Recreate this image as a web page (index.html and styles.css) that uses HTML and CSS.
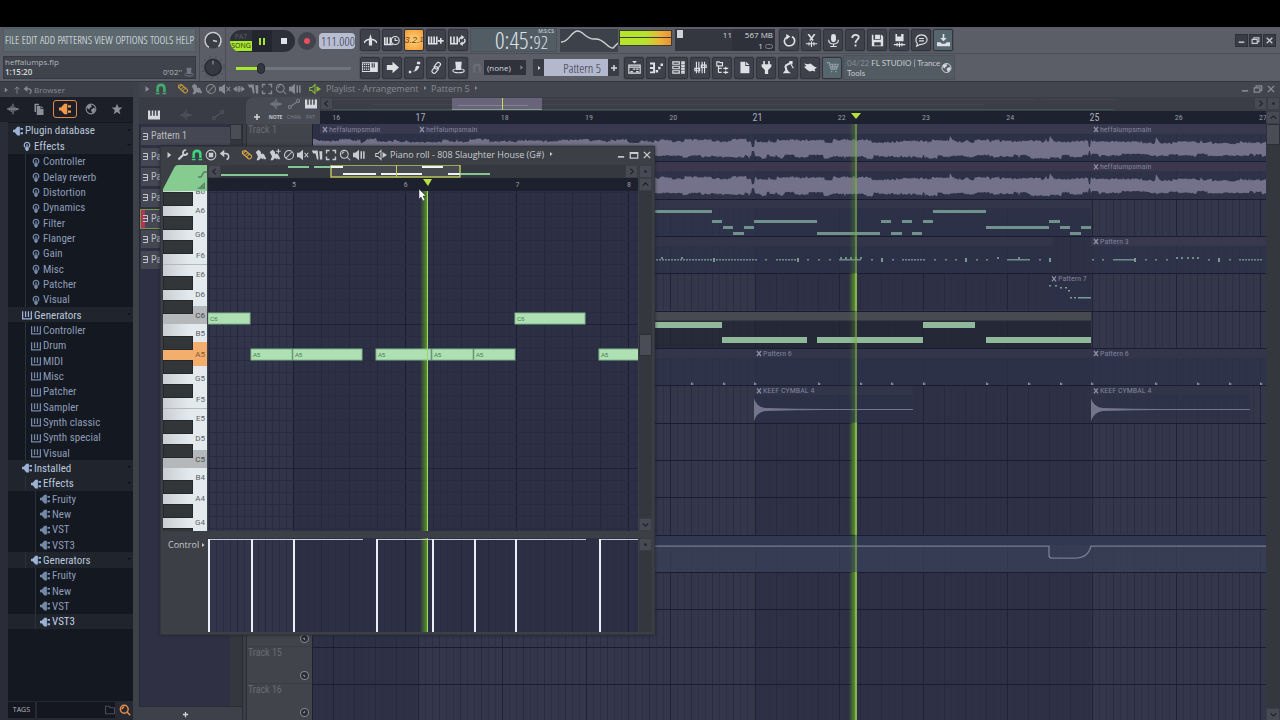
FILE: index.html
```html
<!DOCTYPE html>
<html lang="en">
<head>
<meta charset="utf-8">
<title>FL Studio - heffalumps.flp</title>
<link rel="stylesheet" href="styles.css">
</head>
<body>
<svg class="sprite" aria-hidden="true">
  <symbol id="caret" viewBox="0 0 16 16"><path class="f" d="M6 4l5 4-5 4z"/></symbol>
  <symbol id="up" viewBox="0 0 16 16"><path d="M8 14V3M4 7l4-4 4 4"/></symbol>
  <symbol id="undo" viewBox="0 0 16 16"><path stroke-width="2" d="M5 6h4c5 0 5 7 1 8"/><path class="f" d="M7 1v10L1 6z"/></symbol>
  <symbol id="magnet" viewBox="0 0 16 16"><path stroke-width="3.4" d="M3.5 12V7c0-6 9-6 9 0v5"/><path class="f" d="M1 13h5v2H1zM10 13h5v2h-5z"/></symbol>
  <symbol id="pencil" viewBox="0 0 16 16"><path d="M2 3l4-1 8 7c1 2-2 5-4 4L2 6zM3 6l4-4M6 8l4-4M8 10l4-4"/></symbol>
  <symbol id="brush" viewBox="0 0 16 16"><path class="f" d="M1 4l4-3 3 3 0 3 2-1 2 1 3 6-2 1-2-2 0 2-3-2-3 3H2l2-5z"/></symbol>
  <symbol id="brushp" viewBox="0 0 16 16"><path class="f" d="M1 4l4-3 3 3 0 3 2-1 2 1 3 6-2 1-2-2 0 2-3-2-3 3H2l2-5z"/><path d="M12.500 0v6M9.500 3h6"/></symbol>
  <symbol id="no" viewBox="0 0 16 16"><circle cx="8" cy="8" r="6"/><path d="M4 12l8-8"/></symbol>
  <symbol id="mute" viewBox="0 0 16 16"><path class="f" d="M0 5h3l5-4v14l-5-4H0z"/><path d="M10 5l5 6M15 5l-5 6"/></symbol>
  <symbol id="slip" viewBox="0 0 16 16"><path class="f" d="M0 8l5-4v8zM16 8l-5-4v8z"/><path d="M3 8h10M7 4v8M9 4v8"/></symbol>
  <symbol id="cut" viewBox="0 0 16 16"><path class="f" d="M1 2h8l1 12H8L6 6H3zM11 3h4v11h-3z"/></symbol>
  <symbol id="marq" viewBox="0 0 16 16"><path stroke-width="1.800" d="M2 6V2h4M10 2h4v4M14 10v4h-4M6 14H2v-4"/></symbol>
  <symbol id="zoom" viewBox="0 0 16 16"><circle cx="7" cy="7" r="5.2"/><path d="M4 7c0-2 2-3 3-3M11 11l4 4" /></symbol>
  <symbol id="play" viewBox="0 0 16 16"><path class="f" d="M0 5h3l5-4v14l-5-4H0z"/><path stroke-width="2" d="M11 3v10M14.500 3v10"/></symbol>
  <symbol id="spk" viewBox="0 0 16 16"><path d="M1 6h3l4-4v12l-4-4H1z"/><path class="f" d="M10 4l6 4-6 4z"/></symbol>
  <symbol id="wrench" viewBox="0 0 16 16"><path stroke-width="3" d="M2 14l6-6"/><path stroke-width="2.500" d="M14 5c-1 4-6 4-6 0 0-3 3-4 4-3M8 8l2 0"/></symbol>
  <symbol id="target" viewBox="0 0 16 16"><circle cx="8" cy="8" r="6.500"/><path class="f" d="M5 5h6v6H5z"/></symbol>
  <symbol id="wave" viewBox="0 0 16 16"><path d="M0 8h16M3 6v4M5.500 4v8M8 1v14M10.500 5v6M13 6.500v3"/></symbol>
  <symbol id="auto" viewBox="0 0 16 16"><path d="M4 11l8-6"/><circle cx="2.500" cy="12" r="2"/><circle cx="13.500" cy="4" r="2"/></symbol>
  <symbol id="keys" viewBox="0 0 16 16"><path class="f" d="M0 2h3v7h2V2h2v7h2V2h2v7h2V2h3v12H0z"/></symbol>
  <symbol id="files" viewBox="0 0 16 16"><path class="f" d="M2 1h6v2H4v9H2zM5 4h5v4h4v8H5zM11 4l3 3h-3z"/></symbol>
  <symbol id="plug" viewBox="0 0 16 16"><path class="f" d="M0 6h3v4H0z"/><path class="f" d="M1 8l6-7h4v14H7z"/><path class="f" d="M12 3h4v3h-4zM12 10h4v3h-4z"/></symbol>
  <symbol id="globe" viewBox="0 0 16 16"><circle cx="8" cy="8" r="6.500"/><path class="f" d="M3 3l5-1 1 3-3 2 0 2-3-2zM8 9l4-3 2 3-3 5-2-2z"/></symbol>
  <symbol id="star" viewBox="0 0 16 16"><path class="f" d="M8 1l2 5h5l-4 3.500 1.500 5.500L8 12l-4.500 3L5 9.500 1 6h5z"/></symbol>
  <symbol id="fx" viewBox="0 0 16 16"><path stroke-width="2" d="M5 10c-3-3-1-8 3-8s6 5 3 8"/><path class="f" d="M5 10h6v3l-2 3H7l-2-3zM7 5h2v6H7z"/></symbol>
  <symbol id="gen" viewBox="0 0 16 16"><path stroke-width="2" d="M1 2v12h14V2M5.700 2v9M10.300 2v9"/></symbol>
  <symbol id="metro" viewBox="0 0 16 16"><path stroke-width="2" d="M0 11c3-6 13-6 16 0"/><path class="f" d="M8 0l2 7v7H6V7z"/></symbol>
  <symbol id="wait" viewBox="0 0 20 16"><path stroke-width="2" d="M1 4v9h10M4 4v9M8 4v9"/><circle cx="14" cy="8" r="5"/><path d="M14 5v3h3"/></symbol>
  <symbol id="stepk" viewBox="0 0 20 16"><path stroke-width="2" d="M1 3v9h10V3M4.300 3v9M7.700 3v9M16 5v7M12.500 8.500h7"/></symbol>
  <symbol id="loopk" viewBox="0 0 20 16"><path stroke-width="2" d="M1 3v9h8V3M5 3v9"/><path stroke-width="1.800" d="M12 10c-2-4 1-6 4-6M18 6c2 4-1 6-4 6"/><path class="f" d="M14 1l4 3-4 3zM16 15l-4-3 4-3z"/></symbol>
  <symbol id="typek" viewBox="0 0 20 16"><path stroke-dasharray="1.500 1" stroke-width="1.600" d="M0 4h9M0 7h9M0 10h9"/><path d="M0 2h19v11H0z"/><path class="f" d="M10 2h2v6h1.500V2h1v6H16V2h3v11h-9z"/></symbol>
  <symbol id="arrow" viewBox="0 0 16 16"><path class="f" d="M1 5h7V1l8 7-8 7v-4H1z"/></symbol>
  <symbol id="slide" viewBox="0 0 16 16"><path class="f" d="M1 12h3v3H1zM5 13c5-1 3-4 5-7h4c-1 4-3 7-9 7zM11 1h4v3h-4z"/></symbol>
  <symbol id="link" viewBox="0 0 16 16"><rect x="7" y="1" width="5" height="9" rx="2.500" transform="rotate(40 9 5)"/><rect x="4" y="7" width="5" height="9" rx="2.500" transform="rotate(40 7 11)"/></symbol>
  <symbol id="hat" viewBox="0 0 16 16"><path class="f" d="M4 1h8l-1 10h-6z"/><ellipse cx="8" cy="12" rx="7" ry="2.500"/></symbol>
  <symbol id="plist" viewBox="0 0 16 16"><path d="M1 5h14v10H1zM1 7.500h14M3 13h3M6 10h3M10 13h3M10 10h3"/><path class="f" d="M5 0h6L8 3z"/></symbol>
  <symbol id="roll" viewBox="0 0 16 16"><path stroke-width="2.400" d="M0 3h5v11H0M0 8.500h5"/><path class="f" d="M7 11h3v3H7zM10 7h3v3h-3zM13 3h3v3h-3z"/></symbol>
  <symbol id="rack" viewBox="0 0 16 16"><path d="M1 1h8v3H1zM1 6.500h8v3H1zM1 12h8v3H1zM12 1h3v2h-3zM12 5h3v2h-3zM12 9h3v2h-3zM12 13h3v2h-3z"/></symbol>
  <symbol id="mixer" viewBox="0 0 16 16"><path d="M3 1v14M6 1v14M10 1v14M13 1v14M1 9h6v3H1zM9 5h6v3H9z"/></symbol>
  <symbol id="tree" viewBox="0 0 16 16"><path d="M1 1h3l1 1h3v4H1zM3 6v8M3 9h4M3 14h4M9 9h6M9 14h6M12 7v4M12 12v4"/></symbol>
  <symbol id="doc" viewBox="0 0 16 16"><path class="f" d="M3 1h6v5h5v9H3zM10 1l4 4h-4z"/></symbol>
  <symbol id="plugv" viewBox="0 0 16 16"><path class="f" d="M4 0h2v4H4zM10 0h2v4h-2zM2 4h12v3l-4 4v5H6v-5L2 7z"/></symbol>
  <symbol id="robot" viewBox="0 0 16 16"><path stroke-width="2.600" d="M4 6l7-4M4 6l2 7"/><path class="f" d="M9 0h4v4H9zM1 15l4-5 6 5z"/><path d="M11 4l3 5"/></symbol>
  <symbol id="hand" viewBox="0 0 16 16"><path class="f" d="M0 3l5 1 3-1 5 4 3 1-3 2 1 3-4-1-3 1-4-3L0 7l3-1z"/></symbol>
  <symbol id="cart" viewBox="0 0 16 16"><path d="M1 2h3l2 8h7l2-6H5M6 7h8M8 4v6M11 4v6"/><circle class="f" cx="7" cy="13" r="1"/><circle class="f" cx="12" cy="13" r="1"/></symbol>
  <symbol id="redo" viewBox="0 0 16 16"><path stroke-width="2" d="M11 3.500c6 3 3 11-3 11S-1 7 5 3.500"/><path class="f" d="M4 0l5 3-5 4z"/></symbol>
  <symbol id="scis" viewBox="0 0 16 16"><path stroke-width="2" d="M4 0l6 8M12 0L6 8"/><path d="M1 12h14M5 10v4M8 9v7M11 10v4"/></symbol>
  <symbol id="mic" viewBox="0 0 16 16"><rect class="f" x="5" y="0" width="6" height="10" rx="3"/><path d="M2 7c0 7 12 7 12 0M8 12v3M4 15.500h8"/></symbol>
  <symbol id="help" viewBox="0 0 16 16"><path stroke-width="2.200" d="M4 5c0-5 8-5 8-1 0 3-4 3-4 7M8 13v2.500"/></symbol>
  <symbol id="save" viewBox="0 0 16 16"><path class="f" fill-rule="evenodd" d="M1 1h2v6h9V1h1l2 2v12H1zM4 10v4h8v-4zM5 1h6v5H5z"/></symbol>
  <symbol id="savew" viewBox="0 0 16 16"><path class="f" fill-rule="evenodd" d="M3 0h10v9H3zM5 0v3h5V0z"/><path d="M1 13h14M5 11v4M8 10v6M11 11v4"/></symbol>
  <symbol id="chat" viewBox="0 0 16 16"><path d="M3 12C-1 7 2 1 8 1s9 6 5 10c-2 2-5 2-7 2l-4 2zM5 5.500h6M5 8.500h6"/></symbol>
  <symbol id="dl" viewBox="0 0 16 16"><path class="f" d="M7 0h2v5h3l-4 4-4-4h3zM0 10h4l2 2h4l2-2h4v5H0z"/></symbol>
  <symbol id="min" viewBox="0 0 16 16"><path stroke-width="2.600" d="M3 11h10"/></symbol>
  <symbol id="rest" viewBox="0 0 16 16"><path stroke-width="2" d="M2 6h9v7H2zM5 5V3h9v7h-2"/></symbol>
  <symbol id="max" viewBox="0 0 16 16"><path stroke-width="2" d="M2 4h12v9H2zM2 5.500h12"/></symbol>
  <symbol id="x" viewBox="0 0 16 16"><path stroke-width="2.200" d="M3 3l10 10M13 3L3 13"/></symbol>
  <symbol id="plus" viewBox="0 0 16 16"><path stroke-width="3" d="M8 2v12M2 8h12"/></symbol>
  <symbol id="cl" viewBox="0 0 16 16"><path stroke-width="2" d="M10 3L5 8l5 5"/></symbol>
  <symbol id="cr" viewBox="0 0 16 16"><path stroke-width="2" d="M6 3l5 5-5 5"/></symbol>
  <symbol id="cu" viewBox="0 0 16 16"><path stroke-width="2" d="M3 10l5-5 5 5"/></symbol>
  <symbol id="cd" viewBox="0 0 16 16"><path stroke-width="2" d="M3 6l5 5 5-5"/></symbol>
  <symbol id="dot" viewBox="0 0 16 16"><path class="f" d="M6 6h4v4H6z"/></symbol>
  <symbol id="folder" viewBox="0 0 16 16"><path d="M2 3h5l1 2h6v8H2z"/></symbol>
  <symbol id="pat" viewBox="0 0 12 16"><path stroke-width="2" d="M0 2h9v12H0M0 8h8"/></symbol>
</svg>

<div class="letterbox"></div>

<header class="toolbar">
  <div class="tb-left">
    <nav class="menu" aria-label="Main menu">
      <button>FILE</button><button>EDIT</button><button>ADD</button><button>PATTERNS</button><button>VIEW</button><button>OPTIONS</button><button>TOOLS</button><button>HELP</button>
    </nav>
    <div class="hint"><div>heffalumps.flp</div><div class="hint-row"><b>1:15:20</b><span>0'02''</span><svg class="ic dim"><use href="#hat"/></svg></div></div>
  </div>
  <div class="knobs">
    <svg viewBox="0 0 24 24"><circle cx="12" cy="12" r="8" fill="#3a3d45" stroke="#c9ccd2" stroke-width="1.500" stroke-dasharray="40 11" transform="rotate(120 12 12)"/><path d="M12 12l4 1" stroke="#c9ccd2"/></svg>
    <svg viewBox="0 0 24 24"><circle cx="12" cy="12" r="11" fill="none" stroke="#3f424a" stroke-dasharray="1 5"/><circle cx="12" cy="12" r="8" fill="#363942" stroke="#2b2e36" stroke-width="2"/><path d="M12 5v4" stroke="#81858d"/></svg>
  </div>
  <div class="transport">
    <div class="tr-row">
      <div class="pill">
        <button class="patsong"><span>PAT</span><span class="song">SONG</span></button>
        <button class="pause" aria-label="Pause"><i></i><i></i></button>
        <button class="stop" aria-label="Stop"><i></i></button>
      </div>
      <button class="rec" aria-label="Record"><i></i></button>
      <div class="tempo"><input aria-label="Tempo" value="111.000"></div>
    </div>
    <input class="vol" type="range" min="0" max="100" value="20" aria-label="Song position">
  </div>
  <div class="tb-main">
    <div class="row">
      <div class="bset">
        <button aria-label="Metronome"><svg><use href="#metro"/></svg></button><button aria-label="Wait for input"><svg class="w"><use href="#wait"/></svg></button><button class="count">3.2.<small>1</small></button><button aria-label="Step edit"><svg class="w"><use href="#stepk"/></svg></button><button aria-label="Loop record"><svg class="w"><use href="#loopk"/></svg></button>
      </div>
      <div class="clock"><span>0:45:<em>92</em></span><sup>M:S:CS</sup></div>
      <svg class="scope" viewBox="0 0 58 23"><path d="M1 13C8 14 11 3 17 2s9 9 18 8 13 10 18 9l5-5"/></svg>
      <div class="meter"><i></i><i></i></div>
      <div class="cpu"><span class="blk"></span><span class="n1">11</span><span class="n2">567 MB</span><span class="n3">1 <u></u></span></div>
      <div class="bset">
        <button aria-label="Redo"><svg><use href="#redo"/></svg></button><button aria-label="Cut"><svg><use href="#scis"/></svg></button><button aria-label="Record audio"><svg><use href="#mic"/></svg></button><button aria-label="Help"><svg><use href="#help"/></svg></button><button aria-label="Save"><svg><use href="#save"/></svg></button><button aria-label="Save new version"><svg><use href="#savew"/></svg></button><button aria-label="Chat"><svg><use href="#chat"/></svg></button><button class="teal" aria-label="Download"><svg><use href="#dl"/></svg></button>
      </div>
      <div class="winbtns"><button aria-label="Minimize"><svg class="ic"><use href="#min"/></svg></button><button aria-label="Restore"><svg class="ic"><use href="#rest"/></svg></button><button aria-label="Close"><svg class="ic"><use href="#x"/></svg></button></div>
    </div>
    <div class="row">
      <div class="bset">
        <button aria-label="Typing keyboard"><svg class="w"><use href="#typek"/></svg></button><button aria-label="Scroll"><svg><use href="#arrow"/></svg></button><button aria-label="Slide"><svg><use href="#slide"/></svg></button><button aria-label="Link"><svg><use href="#link"/></svg></button><button aria-label="Performance"><svg><use href="#hat"/></svg></button>
      </div>
      <svg class="ic snap"><use href="#magnet"/></svg>
      <div class="none"><select aria-label="Snap"><option>(none)</option></select><svg class="ic"><use href="#caret"/></svg></div>
      <div class="pattern"><button aria-label="Pattern menu"><svg class="ic"><use href="#caret"/></svg></button><select aria-label="Pattern"><option>Pattern 5</option></select><button aria-label="Add pattern"><svg class="ic"><use href="#plus"/></svg></button></div>
      <div class="bset">
        <button aria-label="Playlist"><svg><use href="#plist"/></svg></button><button aria-label="Piano roll"><svg><use href="#roll"/></svg></button><button aria-label="Channel rack"><svg><use href="#rack"/></svg></button><button aria-label="Mixer"><svg><use href="#mixer"/></svg></button><button aria-label="Browser"><svg><use href="#tree"/></svg></button><button aria-label="Project"><svg><use href="#doc"/></svg></button><button aria-label="Plugins"><svg><use href="#plugv"/></svg></button><button aria-label="Tempo tapper"><svg><use href="#robot"/></svg></button><button aria-label="Touch"><svg><use href="#hand"/></svg></button><button class="teal" aria-label="Shop"><svg class="dim"><use href="#cart"/></svg></button>
      </div>
      <div class="news"><p><span>04/22</span> FL STUDIO | Trance Tools</p><svg class="ic"><use href="#globe"/></svg></div>
    </div>
  </div>
</header>

<main class="desk">
  <aside class="browser">
    <div class="b-title"><svg class="ic"><use href="#caret"/></svg><svg class="ic"><use href="#up"/></svg><svg class="ic"><use href="#undo"/></svg><span>Browser</span></div>
    <div class="b-body">
      <div class="b-tabs">
        <button aria-label="Sounds"><svg class="ic"><use href="#wave"/></svg></button><button aria-label="Files"><svg class="ic"><use href="#files"/></svg></button><button class="on" aria-label="Plugins"><svg class="ic"><use href="#plug"/></svg></button><button aria-label="Online"><svg class="ic"><use href="#globe"/></svg></button><button aria-label="Favourites"><svg class="ic"><use href="#star"/></svg></button>
      </div>
      <ul class="tree">
        <li class="cat l0"><svg class="ic"><use href="#plug"/></svg>Plugin database</li>
        <li class="cat l1"><svg class="ic"><use href="#fx"/></svg>Effects</li>
        <li class="l2"><svg class="ic"><use href="#fx"/></svg>Controller</li>
        <li class="l2"><svg class="ic"><use href="#fx"/></svg>Delay reverb</li>
        <li class="l2"><svg class="ic"><use href="#fx"/></svg>Distortion</li>
        <li class="l2"><svg class="ic"><use href="#fx"/></svg>Dynamics</li>
        <li class="l2"><svg class="ic"><use href="#fx"/></svg>Filter</li>
        <li class="l2"><svg class="ic"><use href="#fx"/></svg>Flanger</li>
        <li class="l2"><svg class="ic"><use href="#fx"/></svg>Gain</li>
        <li class="l2"><svg class="ic"><use href="#fx"/></svg>Misc</li>
        <li class="l2"><svg class="ic"><use href="#fx"/></svg>Patcher</li>
        <li class="l2"><svg class="ic"><use href="#fx"/></svg>Visual</li>
        <li class="cat l1"><svg class="ic"><use href="#gen"/></svg>Generators</li>
        <li class="l2"><svg class="ic"><use href="#gen"/></svg>Controller</li>
        <li class="l2"><svg class="ic"><use href="#gen"/></svg>Drum</li>
        <li class="l2"><svg class="ic"><use href="#gen"/></svg>MIDI</li>
        <li class="l2"><svg class="ic"><use href="#gen"/></svg>Misc</li>
        <li class="l2"><svg class="ic"><use href="#gen"/></svg>Patcher</li>
        <li class="l2"><svg class="ic"><use href="#gen"/></svg>Sampler</li>
        <li class="l2"><svg class="ic"><use href="#gen"/></svg>Synth classic</li>
        <li class="l2"><svg class="ic"><use href="#gen"/></svg>Synth special</li>
        <li class="l2"><svg class="ic"><use href="#gen"/></svg>Visual</li>
        <li class="cat l1"><svg class="ic"><use href="#plug"/></svg>Installed</li>
        <li class="cat l2"><svg class="ic"><use href="#plug"/></svg>Effects</li>
        <li class="l3"><svg class="ic"><use href="#plug"/></svg>Fruity</li>
        <li class="l3"><svg class="ic"><use href="#plug"/></svg>New</li>
        <li class="l3"><svg class="ic"><use href="#plug"/></svg>VST</li>
        <li class="l3"><svg class="ic"><use href="#plug"/></svg>VST3</li>
        <li class="cat l2"><svg class="ic"><use href="#plug"/></svg>Generators</li>
        <li class="l3"><svg class="ic"><use href="#plug"/></svg>Fruity</li>
        <li class="l3"><svg class="ic"><use href="#plug"/></svg>New</li>
        <li class="l3"><svg class="ic"><use href="#plug"/></svg>VST</li>
        <li class="l3 sel"><svg class="ic"><use href="#plug"/></svg>VST3</li>
      </ul>
      <div class="tags"><button>TAGS</button><input aria-label="Filter by tag"><svg class="ic fold"><use href="#folder"/></svg><button class="find" aria-label="Search"><svg class="ic"><use href="#zoom"/></svg></button></div>
    </div>
  </aside>

  <section class="playlist">
    <div class="p-title">
      <svg class="ic"><use href="#caret"/></svg><svg class="ic green"><use href="#magnet"/></svg>
      <div class="tools"><svg class="ic gold"><use href="#pencil"/></svg><svg class="ic"><use href="#brush"/></svg><svg class="ic"><use href="#no"/></svg><svg class="ic"><use href="#mute"/></svg><svg class="ic"><use href="#slip"/></svg><svg class="ic"><use href="#cut"/></svg><svg class="ic"><use href="#marq"/></svg><svg class="ic"><use href="#zoom"/></svg><svg class="ic"><use href="#play"/></svg></div>
      <svg class="ic lime"><use href="#spk"/></svg>
      <h2>Playlist - Arrangement <svg class="tiny"><use href="#caret"/></svg> Pattern 5 <svg class="tiny"><use href="#caret"/></svg></h2>
      <div class="flatbtns"><svg class="ic"><use href="#min"/></svg><svg class="ic"><use href="#rest"/></svg><svg class="ic"><use href="#x"/></svg></div>
    </div>
    <div class="p-head">
      <div class="p-tabs"><svg class="ic on"><use href="#keys"/></svg><svg class="ic"><use href="#wave"/></svg><svg class="ic"><use href="#auto"/></svg></div>
      <div class="p-modes">
        <button aria-label="Add track"><svg class="ic"><use href="#plus"/></svg></button>
        <div><svg class="ic"><use href="#wave"/></svg><b>NOTE</b></div><div><svg class="ic"><use href="#auto"/></svg><span>CHAN</span></div><div><svg class="ic on"><use href="#keys"/></svg><span>PAT</span></div>
      </div>
      <div class="p-nav">
        <div class="mini"><button aria-label="Scroll left"><svg class="ic"><use href="#cl"/></svg></button><svg class="fill" id="mini"></svg><button aria-label="Scroll right"><svg class="ic"><use href="#cr"/></svg></button><button aria-label="Options"><svg class="ic"><use href="#dot"/></svg></button></div>
        <div class="ruler"><svg class="fill" id="ruler"></svg><button aria-label="Scroll up"><svg class="ic"><use href="#cu"/></svg></button></div>
      </div>
    </div>
    <div class="p-body">
      <div class="picker">
        <div class="pk-list">
          <ul>
            <li><svg class="pi"><use href="#pat"/></svg>Pattern 1</li><li><svg class="pi"><use href="#pat"/></svg>Pattern 2</li><li><svg class="pi"><use href="#pat"/></svg>Pattern 3</li><li><svg class="pi"><use href="#pat"/></svg>Pattern 4</li><li class="sel"><svg class="pi"><use href="#pat"/></svg>Pattern 5</li><li><svg class="pi"><use href="#pat"/></svg>Pattern 6</li><li><svg class="pi"><use href="#pat"/></svg>Pattern 7</li>
          </ul>
          <div class="vbar"><i></i></div>
        </div>
        <button class="addpat" aria-label="Add pattern"><svg class="ic"><use href="#plus"/></svg></button>
      </div>
      <ol class="tracks">
        <li>Track 1</li><li>Track 2</li><li>Track 3</li><li>Track 4</li><li>Track 5</li><li>Track 6</li><li>Track 7</li><li>Track 8</li><li>Track 9</li><li>Track 10</li><li>Track 11</li><li>Track 12</li><li>Track 13</li><li>Track 14</li><li>Track 15</li><li>Track 16</li>
      </ol>
      <svg class="fill" id="grid"></svg>
      <div class="vbar main"><i></i><button aria-label="Scroll down"><svg class="ic"><use href="#cd"/></svg></button></div>
    </div>
  </section>

  <section class="roll">
    <div class="r-title">
      <svg class="ic"><use href="#caret"/></svg><svg class="ic"><use href="#wrench"/></svg><svg class="ic green"><use href="#magnet"/></svg><svg class="ic"><use href="#target"/></svg><svg class="ic"><use href="#undo"/></svg>
      <div class="tools"><svg class="ic gold"><use href="#pencil"/></svg><svg class="ic"><use href="#brush"/></svg><svg class="ic"><use href="#brushp"/></svg><svg class="ic"><use href="#no"/></svg><svg class="ic"><use href="#mute"/></svg><svg class="ic"><use href="#cut"/></svg><svg class="ic"><use href="#marq"/></svg><svg class="ic"><use href="#zoom"/></svg><svg class="ic"><use href="#play"/></svg></div>
      <svg class="ic spk"><use href="#spk"/></svg>
      <h2>Piano roll - 808 Slaughter House (G#) <svg class="tiny"><use href="#caret"/></svg></h2>
      <div class="flatbtns"><svg class="ic"><use href="#min"/></svg><svg class="ic"><use href="#max"/></svg><svg class="ic"><use href="#x"/></svg></div>
    </div>
    <div class="r-body">
      <svg class="corner" viewBox="0 0 44 26"><path d="M0 26V24L11 3C12 1 13 0 15 0H44V26z" fill="#86cc90"/><path d="M35 12h3l3-5h3" fill="none" stroke="#5b7f66" stroke-width="1.500"/><path d="M34 24l8-7v7z" fill="#5f8a6b"/></svg>
      <div class="r-nav">
        <div class="mini"><button aria-label="Scroll left"><svg class="ic"><use href="#cl"/></svg></button><svg class="fill" id="rmini"></svg><button aria-label="Scroll right"><svg class="ic"><use href="#cr"/></svg></button></div>
        <svg class="fill rr" id="rruler"></svg>
      </div>
      <div class="r-corner"><button aria-label="Options"><svg class="ic"><use href="#dot"/></svg></button><button aria-label="Scroll up"><svg class="ic"><use href="#cu"/></svg></button></div>
      <div class="keys">
        <span class="cut">B6</span><span class="t b">A6</span><span class="t b">G6</span><span class="b">F6</span><span class="e">E6</span><span class="t b">D6</span><span class="b c">C6</span>
        <span>B5</span><span class="t b lit">A5</span><span class="t b">G5</span><span class="b">F5</span><span class="e">E5</span><span class="t b">D5</span><span class="b c">C5</span>
        <span>B4</span><span class="t b">A4</span><span class="t b">G4</span><span class="b"></span>
      </div>
      <svg class="fill" id="notes"></svg>
      <div class="vbar"><i></i><button aria-label="Scroll down"><svg class="ic"><use href="#cd"/></svg></button></div>
      <div class="ctl-label">Control <svg class="tiny"><use href="#caret"/></svg></div>
      <svg class="fill" id="ctl"></svg>
      <div class="vbar low"><button aria-label="Options"><svg class="ic"><use href="#dot"/></svg></button></div>
    </div>
  </section>
  <svg class="cursor" viewBox="0 0 10 14"><path d="M1 1v10l2-2 2 4 2-1-2-4h3z" fill="#fff" stroke="#22242c" stroke-width=".5"/></svg>
</main>
<script src="app.js"></script>
</body>
</html>
```

FILE: styles.css
```css
:root {
  --narrow: "Roboto Condensed", "Open Sans Condensed", sans-serif;
  --thin: "Open Sans Condensed Light", "Roboto Condensed Light", "Roboto Condensed", sans-serif;
  --ui: "Open Sans", "Noto Sans", sans-serif;
}
* { box-sizing: border-box; }
body { margin: 0; min-height: 100vh; display: flex; flex-direction: column; background: #3b3e46; color: #a5a8b0; font: 10px/12px var(--ui); overflow: hidden; }
button, input, select { font: inherit; color: inherit; border: 0; padding: 0; margin: 0; background: none; appearance: none; border-radius: 0; min-width: 0; }
button { display: flex; align-items: center; justify-content: center; }
ul, ol { list-style: none; margin: 0; padding: 0; }
h2, p { margin: 0; font-weight: 400; }
svg { fill: none; stroke: currentColor; stroke-width: 1.4; display: block; flex: none; }
.sprite { position: absolute; width: 0; height: 0; }
.f { fill: currentColor; stroke: none; }
.ic { width: 12px; height: 12px; }
.tiny { width: 8px; height: 8px; display: inline; }
.dim { opacity: .45; }
.fill { flex: 1; min-width: 0; width: 100%; height: 100%; stroke: none; }
.green { color: #3fae6d; }
.gold { color: #c79a3e; }
.lime { color: #8cba3d; }
.letterbox { height: 27px; background: #000; }

.toolbar { height: 55px; display: flex; background: #5b5e66; border-bottom: 1px solid #33363e; color: #d5d8dd; }
.tb-left { width: 200px; padding: 1px 3px 2px; display: flex; flex-direction: column; gap: 4px; border-right: 1px solid #4a4d55; }
.menu { height: 24px; background: #5c686e; border: 1px solid #515a61; display: flex; align-items: center; justify-content: space-between; padding: 0 1px; font: 300 11px/14px var(--thin); color: #e6ebee; }
.hint { height: 23px; background: #3f434b; padding: 0 1px; font-size: 8px; line-height: 10px; color: #b2b5bc; border: 1px solid #363941; }
.hint-row { display: flex; gap: 2px; }
.hint-row b { flex: 1; font-weight: 600; color: #d9dbdf; }
.hint-row .ic { width: 10px; height: 10px; }
.knobs { width: 26px; display: flex; flex-direction: column; gap: 2px; align-items: center; border-right: 1px solid #4a4d55; padding-top: 1px; }
.knobs svg { width: 24px; height: 25px; }
.transport { width: 134px; display: flex; flex-direction: column; padding: 2px 3px 0 4px; }
.tr-row { display: flex; align-items: center; height: 24px; }
.pill { width: 65px; height: 22px; display: flex; background: #2d3039; border-radius: 11px; overflow: hidden; }
.patsong { width: 22px; flex-direction: column; align-items: stretch; font: 7px/9px var(--ui); color: #5c6069; text-align: center; }
.patsong .song { background: #a8e82c; color: #26301a; line-height: 10px; }
.pause { width: 20px; gap: 2px; background: #24262f; }
.pause i { width: 2px; height: 7px; background: #a8e82c; }
.stop { flex: 1; }
.stop i { width: 6px; height: 6px; background: #dfe2ea; }
.rec { width: 18px; height: 18px; border-radius: 9px; background: #41444c; margin: 0 3px; }
.rec i { width: 6px; height: 6px; border-radius: 3px; background: #e8505b; }
.tempo { width: 36px; height: 16px; background: #b9bdd2; border-radius: 4px; display: flex; }
.tempo input { width: 100%; font: 300 13px/16px var(--thin); color: #2f3348; padding-left: 2px; }
.vol { width: 115px; height: 12px; margin: 9px 0 0 6px; background: linear-gradient(90deg, #a8e82c 22%, #70747c 22%) center / 100% 3px no-repeat; }
.vol::-webkit-slider-thumb { appearance: none; width: 8px; height: 11px; border-radius: 4px; background: #34373f; border: 1px solid #23252c; }
.tb-main { flex: 1; display: flex; flex-direction: column; min-width: 0; }
.row { height: 27px; display: flex; align-items: center; border-bottom: 1px solid #4b4e56; }
.row + .row { border: 0; }
.bset { display: flex; gap: 2px; }
.bset button { width: 20px; height: 22px; background: #3e414a; border: 1px solid #31343c; border-radius: 2px; box-shadow: 0 0 0 1px #50535b; color: #dde0e5; }
.bset svg { width: 13px; height: 13px; }
.bset svg.w { width: 16px; }
.bset .count { background: radial-gradient(#ffd27a, #f39a35); color: #6d421a; font: italic 9px/12px "Liberation Sans", sans-serif; }
.count small { font-size: 7px; }
.bset .teal { background: #55666e; }
.clock { width: 87px; height: 24px; margin-left: 2px; background: #515c64; border: 1px solid #49525a; display: flex; align-items: center; justify-content: flex-end; padding: 0 1px; color: #dde2e7; position: relative; }
.clock span { font: 300 24px/24px var(--thin); padding-right: 7px; }
.clock em { font: 300 18px/20px var(--thin); }
.clock sup { position: absolute; top: 0; right: 2px; font: 5px/5px var(--ui); }
.scope { width: 58px; height: 23px; margin-left: 3px; background: #3d4149; color: #ced1d6; }
.meter { width: 53px; height: 16px; margin: 0 3px 5px 1px; display: flex; flex-direction: column; gap: 1px; background: #3a3d30; padding: 1px 1px; }
.meter i { flex: 1; background: linear-gradient(90deg, #b6e32e 50%, #f0b13a 80%, #e8903a); }
.cpu { width: 100px; height: 22px; margin-right: 4px; background: linear-gradient(90deg, #343740 57px, #2e3139 57px); display: grid; grid-template-columns: 8px 48px 1fr; font: 8px/11px var(--ui); text-align: right; color: #d7dadf; padding: 0 2px 0 1px; }
.cpu .blk { height: 8px; background: #cfd2d8; margin: 1px 1px; }
.cpu .n3 { grid-column: 3; }
.cpu u { display: inline-block; width: 8px; height: 5px; border: 1px solid #7b7f87; border-radius: 3px; }
.winbtns { margin-left: auto; margin-right: 4px; display: flex; gap: 1px; }
.winbtns button { width: 13px; height: 13px; background: #393c45; border: 1px solid #2e3139; color: #c8cbd1; }
.winbtns .ic { width: 9px; height: 9px; }
.snap { width: 10px; margin: 0 2px 0 4px; color: #6b6e76; }
.none { width: 42px; height: 15px; margin-right: 7px; background: #2f323b; display: flex; align-items: center; font-size: 8px; }
.none select { flex: 1; padding-left: 3px; height: 15px; }
.none .ic { width: 9px; height: 9px; color: #7d818a; }
.pattern { display: flex; height: 17px; width: 86px; margin-right: 5px; }
.pattern button { width: 11px; background: #393c45; color: #d6d9de; }
.pattern .ic { width: 8px; height: 8px; }
.pattern select { flex: 1; background: #b4b8cd; color: #2f3348; font: 300 13px/16px var(--thin); text-align-last: right; padding-right: 7px; }
.news { width: 112px; height: 25px; margin-left: 1px; padding: 1px 2px 1px 3px; background: #535b62; border: 1px solid #4b5259; display: flex; align-items: center; }
.news p { flex: 1; font: 8px/10px Lato, var(--ui); color: #c6cacf; }
.news .ic { width: 11px; }
.news span { color: #858a92; }

.desk { flex: 1; display: flex; position: relative; min-height: 0; }
.browser { width: 139px; display: flex; flex-direction: column; background: #2a2d37; border-right: 6px solid #3d4149; }
.b-title { height: 15px; display: flex; align-items: center; gap: 1px; padding-left: 1px; font-size: 8px; color: #878a92; background: #3c3f47; }
.b-title .ic { width: 10px; height: 10px; }
.b-body { flex: 1; display: flex; flex-direction: column; background: #141821; margin-left: 8px; }
.b-tabs { height: 25px; margin-left: -8px; display: flex; align-items: center; background: #1c1f28; color: #8b8f97; padding: 1px 3px 2px 0; }
.b-tabs button { flex: 1; height: 18px; border: 1px solid transparent; border-radius: 3px; margin: 0 1px; }
.b-tabs .on { border-color: #dd8a4c; color: #f19a4b; }
.tree { flex: 1; display: flex; flex-direction: column; padding-top: 1px; font: 400 11px/15px var(--narrow); color: #8c9cb6; }
.tree li { height: calc(46px / 3); padding-top: 1px; display: flex; align-items: center; gap: 2px; position: relative; }
.tree .ic { width: 10px; height: 10px; color: #7489a8; }
.tree .cat { background: #1f242d; color: #bac6da; }
.tree .cat .ic, .tree .sel .ic { color: #9db2d4; }
.tree .cat::after { content: ""; margin: 0 2px 0 auto; border: 2px solid transparent; border-top-color: #0c0f15; }
.tree .sel { background: #1f242d; color: #c4d0e4; }
.tree .l0 { padding-left: 5px; padding-top: 0; } .l1 { padding-left: 14px; } .l2 { padding-left: 23px; } .l3 { padding-left: 32px; }
.tree .l2::before, .tree .l3::before { content: ""; position: absolute; left: 17px; top: 0; bottom: 0; width: 4px; border-left: 1px solid #2b313d; }
.tree .l3::before { left: 27px; }
.tags { height: 20px; display: flex; gap: 2px; padding: 1px 0 3px; background: #262932; font-size: 7px; position: relative; }
.tags button { width: 27px; background: #14171f; color: #b3b6bd; }
.tags input { width: 79px; background: #14171f; }
.tags .fold { position: absolute; left: 96px; top: 3px; color: #4a4e57; }
.tags .find { width: 16px; background: none; color: #e58b4a; }
.tags .find .ic { stroke-width: 2; }

.playlist { flex: 1; min-width: 0; display: flex; flex-direction: column; }
.p-title { height: 15px; display: flex; align-items: center; gap: 2px; padding: 0 0 1px 2px; background: #42454d; color: #878a92; }
.tools { display: flex; gap: 2px; margin-left: 8px; }
.p-title .lime { margin-left: 6px; }
.p-title h2 { margin-left: 3px; font-size: 9px; line-height: 14px; white-space: pre; }
.flatbtns { margin-left: auto; display: flex; gap: 3px; padding-right: 4px; }
.flatbtns .ic { width: 10px; height: 10px; }
.p-head { height: 27px; display: flex; background: #393c44; }
.p-tabs { width: 107px; display: flex; align-items: flex-end; gap: 20px; padding: 0 0 3px 9px; color: #52555e; }
.p-head .on { color: #d4d7dc; }
.p-modes { width: 74px; display: grid; grid-template-columns: 18px 19px 18px 15px; background: #484b54; border-radius: 8px 0 0 0; padding-left: 2px; color: #7d8189; font: 5px/8px var(--ui); text-align: center; }
.p-modes button { align-items: flex-end; padding-bottom: 3px; color: #d4d7dc; }
.p-modes button .ic { width: 8px; height: 8px; }
.p-modes div { display: flex; flex-direction: column; align-items: center; gap: 3px; padding-top: 1px; min-width: 0; }
.p-modes b { color: #c2c5cb; }
.p-nav { flex: 1; min-width: 0; display: flex; flex-direction: column; }
.mini, .ruler { height: 14px; display: flex; background: #3b3e46; }
.ruler { height: 13px; background: #1e2130; }
.mini button, .ruler button, .r-corner button, .vbar button { width: 13px; height: 13px; background: #474a52; border: 1px solid #3a3d45; color: #1f2129; flex: none; }
.mini .ic, .ruler .ic, .r-corner .ic, .vbar .ic { width: 9px; height: 9px; }
.ruler button { width: 14px; }
.p-body { flex: 1; min-height: 0; display: flex; background: #3b3e46; }
.picker { width: 104px; margin-right: 3px; display: flex; flex-direction: column; border-right: 1px solid #2a2d35; }
.pk-list { flex: 1; display: flex; background: #2f3044; }
.picker ul { flex: 1; padding-top: 3px; border-left: 1px solid #262935; }
.picker li { height: 18px; margin: 0 0 calc(8px / 3) 1px; padding: 0 2px; display: flex; align-items: center; gap: 2px; background: #454852; color: #b9bcc3; font: 400 10px/18px var(--narrow); }
.picker .sel { outline: 1px solid #75974a; background: linear-gradient(90deg, #b23358 4px, #454852 4px); }
.pi { width: 6px; height: 9px; color: #c2c5cb; stroke-width: 2; }
.vbar { width: 12px; background: #34373e; display: flex; flex-direction: column; justify-content: space-between; }
.vbar i { height: 16px; background: #4a4d55; border: 1px solid #2d3037; }
.vbar.main { width: 14px; }
.vbar.main i { height: 21px; }
.vbar.main button { width: 14px; }
.addpat { height: 15px; padding-right: 10px; background: #3e4149; color: #d0d3d8; border-top: 1px solid #2a2d35; }
.addpat .ic { width: 7px; height: 7px; }
.tracks { flex: none; height: 100%; width: 66px; overflow: hidden; background: #42444c; color: #686b73; font: 400 10px/12px var(--narrow); border-left: 1px solid #2b2e36; }
.tracks li { height: calc(112px / 3); padding-left: 1px; position: relative; border-bottom: 1px solid #3b3d45; }
.tracks li::after { content: ""; position: absolute; right: 3px; bottom: 3px; width: 7px; height: 7px; border: 1px solid #83868d; border-radius: 4px; background: radial-gradient(#83868d 1px, #2c2f37 1px); }

.roll { position: absolute; left: 160px; top: 64px; width: 495px; display: flex; flex-direction: column; background: #3c3f46; border: 1px solid #33363d; box-shadow: 0 0 3px #22242c; padding: 0 2px 2px; }
.r-title { height: 18px; padding-bottom: 2px; display: flex; align-items: center; gap: 2px; color: #c9ccd1; }
.r-title .green { color: #3ed37c; }
.r-title .gold { color: #e3ab3c; }
.r-title .spk { margin-left: 8px; }
.r-title h2 { font-size: 9px; line-height: 14px; margin-left: 1px; white-space: pre; }
.r-title .flatbtns { padding-right: 0; }
.r-body { display: grid; grid-template-columns: 44px 1fr 13px; grid-template-rows: 26px 340px 7px 94px; column-gap: 1px; }
.corner { width: 44px; height: 26px; stroke: none; }
.r-nav { display: flex; flex-direction: column; min-width: 0; }
.r-nav .mini { height: 13px; background: #35383f; }
.r-nav .rr { height: 13px; background: #1d202d; flex: none; }
.keys { display: flex; flex-direction: column; overflow: hidden; background: #dfe5e8; }
.keys span { flex: none; height: 18px; line-height: 20px; text-align: right; padding-right: 2px; font-family: Roboto, "Liberation Sans", sans-serif; font-size: 8px; color: #5e6266; position: relative; background: linear-gradient(90deg, #c9cdd1, #e3eaee 60%); }
.keys .t { height: 24px; line-height: 26px; }
.keys .cut { height: 7px; line-height: 1px; overflow: hidden; }
.keys .b::before { content: ""; position: absolute; left: 0; top: -6px; width: 28px; height: 12px; background: #333638; border: 1px solid #25282a; z-index: 1; }
.keys .e { border-top: 1px solid #b4b9bd; }
.keys .c { background: #b5b8bb; color: #44484c; }
.keys .lit { background: #f3ae6d; color: #7d5a36; }
.r-body .vbar { width: 13px; }
.r-body .vbar i { margin-top: 143px; height: 22px; }
.ctl-label { grid-row: 4; grid-column: 1; font-size: 9px; color: #c4c7cc; padding-left: 5px; white-space: nowrap; display: flex; align-items: center; height: 14px; }
#ctl { grid-row: 4; grid-column: 2; }
.low { grid-row: 4; grid-column: 3; }
.cursor { position: absolute; left: 418px; top: 106px; width: 10px; height: 14px; }

.num { font: 8px var(--narrow); fill: #959aa4; }
.num.hi { font-size: 10px; fill: #a9adb6; }
.clipname { font: 400 8px var(--narrow); fill: #80829a; }
.notename { font: 6px "Liberation Sans", sans-serif; fill: #47774f; }
```

FILE: app.js
```js
const NS = 'http://www.w3.org/2000/svg';
function add(parent, tag, attrs, text) {
  const e = document.createElementNS(NS, tag);
  for (const k in attrs) e.setAttribute(k, attrs[k]);
  if (text) e.textContent = text;
  parent.appendChild(e);
  return e;
}
const box = (p, x, y, w, h, fill, more) => add(p, 'rect', { x, y, width: w, height: h, fill, ...more });
function glow(svg, id) {
  const g = add(add(svg, 'defs', {}), 'linearGradient', { id });
  add(g, 'stop', { offset: 0, 'stop-color': '#5fa01c', 'stop-opacity': 0 });
  add(g, 'stop', { offset: .9, 'stop-color': '#62ac22', 'stop-opacity': .85 });
}

const BAR = 84.25, TRACK = 112 / 3, LEFT = 312;
const barX = n => 754.5 + (n - 21) * BAR;
const grid = document.getElementById('grid');
const px = x => x - LEFT;
const TOP = 124;
const ty = n => n * TRACK;
glow(grid, 'g1');

for (let b = 13; b < 45; b += 4)
  box(grid, px(barX(b)), 0, BAR * 4, 1200, (b - 1) % 8 ? '#2e3045' : '#34364a');
for (let i = 0; i < 400; i++) {
  const x = px(barX(15) + i * BAR / 12);
  const strong = i % 12 === 0, beat = i % 3 === 0;
  box(grid, Math.round(x), 0, 1, 1200, strong ? '#20223a' : beat ? '#272a3e' : '#2c2e43', { opacity: strong ? 1 : .8 });
}

const clip = (t, x0, x1, head = '#38384f', body = '#2d3249') => {
  box(grid, px(x0), ty(t), x1 - x0, 10, head);
  box(grid, px(x0), ty(t) + 10, x1 - x0, TRACK - 10, body, { opacity: .72 });
};
const label = (t, x, name) => {
  add(grid, 'path', { d: `M${px(x) + 3} ${ty(t) + 3}l4 5m0-5l-4 5`, stroke: '#8b8da1' });
  add(grid, 'text', { x: px(x) + 9, y: ty(t) + 8, class: 'clipname' }, name);
};

let seed = 7;
const rnd = () => (seed = (seed * 16807) % 2147483647) / 2147483647;
const loud = [];
let u = 7, d = 7;
for (let i = 0; i < 1000; i++) {
  if (rnd() < .18) u = 5.500 + rnd() * 3.500;
  if (rnd() < .18) d = 5 + rnd() * 4;
  const quiet = i > 779 ? .8 : 1;
  loud[i] = [(u + rnd() * 2) * quiet, (d + rnd() * 1.500) * quiet];
}
for (const [x, v] of [[638, 13], [738, 13], [844, 12], [889, 9]])
  for (let k = 0; k < 8; k++) loud[x + k][0] = Math.max(loud[x + k][0], v - k * 1.500);
for (const x of [440, 441, 442, 777, 778]) loud[x] = [2, 2];
function wave(t) {
  const c = ty(t) + 25;
  let p = `M0 ${c}`;
  for (let i = 0; i < 1000; i++) p += `L${i} ${(c - loud[i][0]).toFixed(1)}`;
  for (let i = 999; i >= 0; i--) p += `L${i} ${(c + loud[i][1]).toFixed(1)}`;
  add(grid, 'path', { d: p + 'z', fill: '#74728a' });
}
for (const t of [0, 1]) {
  clip(t, 320, 2600, t ? '#3c374f' : '#38384f');
  wave(t);
  label(t, 320, 'heffalumpsmain');
  label(t, 417, 'heffalumpsmain');
  label(t, 1091, 'heffalumpsmain');
}

clip(2, 320, 1091, '#33354b');
const seq = [[650, 712, 212], [712, 722, 222], [723, 733, 228], [733, 744, 234], [744, 754, 228], [754, 817, 222], [817, 880, 234], [881, 891, 222], [891, 902, 234], [902, 912, 222], [912, 922, 234], [923, 933, 222], [933, 986, 212], [986, 1049, 228], [1049, 1060, 222], [1060, 1070, 228], [1070, 1081, 234], [1081, 1091, 228]];
for (const [a, b, y] of seq) box(grid, px(a), y - TOP - 2, b - a, 3, '#71928a');

clip(3, 320, 1053, '#33354b');
clip(3, 1091, 2600);
label(3, 1091, 'Pattern 3');
const dash = (a, b) => box(grid, px(a), 135, b - a, 1.500, '#6e8d89');
for (let x = 656; x < 756; x += 3) dash(x, x + 2);
for (let x = 776; x < 800; x += 3) dash(x, x + 2);
dash(839, 861); dash(1007, 1030); dash(1113, 1135);
for (let x = 902; x < 925; x += 3) dash(x, x + 2);
for (let x = 1239; x < 1262; x += 3) dash(x, x + 2);
for (const x of [661, 681, 840, 845, 850, 855, 860, 997, 1018, 1176, 1181, 1187, 1192, 1197]) box(grid, px(x), 133, 2, 2, '#6e8d89');
for (const x of [765, 807, 818, 829, 871, 892, 934, 945, 955, 976, 986, 1039, 1092, 1102, 1145, 1155, 1166, 1208, 1229]) dash(x, x + 2);
for (const x of [713, 797, 881, 965, 1049, 1134, 1218]) box(grid, px(x), 134, 2, 4, '#7a9a90');

clip(4, 1049, 1091, '#2d2f44');
label(4, 1049, 'Pattern 7');
for (const [x, y, w] of [[1049, 285, 2], [1055, 285, 2], [1060, 287, 2], [1065, 287, 2], [1068, 290, 2], [1070, 297, 2], [1074, 297, 2], [1078, 297, 13]]) box(grid, px(x), y - TOP, w, 1.500, '#7a9a93');

clip(5, 320, 1091, '#484a51', '#232532');
for (const [a, b] of [[650, 722], [923, 975]]) box(grid, px(a), 198, b - a, 6, '#90b99b');
for (const [a, b] of [[722, 807], [817, 923], [986, 1091]]) box(grid, px(a), 213, b - a, 6, '#90b99b');

clip(6, 320, 2600, '#33354b');
label(6, 754, 'Pattern 6');
label(6, 1091, 'Pattern 6');
for (const x of [691, 723, 754, 818, 860, 891, 923, 986, 1028, 1060, 1091, 1155, 1197, 1229, 1260])
  add(grid, 'path', { d: `M${px(x)} 258l3 2-3 2z`, fill: '#8085a0' });

for (const x of [754, 1091]) {
  clip(7, x, x + 159, '#30354a');
  label(7, x, 'KEEF CYMBAL 4');
  const X = px(x), c = 285.500;
  add(grid, 'path', { d: `M${X} ${c - 11}q3 9 12 9.500q30 1 60 1h87v1h-87q-30 0-60 1q-9 1-12 10z`, fill: '#74758c' });
}

clip(11, 312, 2600, '#303951', '#394159');
add(grid, 'path', { d: `M0 ${ty(11) + 11.500}H737v9q0 3 3 3h23q13 0 16-12H2400`, stroke: '#727b90', fill: 'none' });

for (let t = 1; t < 30; t++) box(grid, 0, Math.round(ty(t)), 3000, 1, '#1b1c32');
box(grid, 0, 0, 1, 1200, '#20222f');
box(grid, px(849), 0, 8, 1200, 'url(#g1)', { opacity: .45 });
for (const [a, b] of [[4, 5], [8, 11], [12, 30]]) {
  box(grid, px(849), ty(a), 8, ty(b) - ty(a), 'url(#g1)');
  box(grid, px(855), ty(a), 2, ty(b) - ty(a), '#83bd4c');
}
box(grid, px(855), 0, 2, 1200, '#86a95c', { opacity: .5 });

const ruler = document.getElementById('ruler');
for (let b = 16; b < 28; b++) {
  const hi = b % 4 === 1;
  add(ruler, 'text', { x: barX(b) - 317, y: hi ? 10 : 9, class: hi ? 'num hi' : 'num', 'text-anchor': 'middle' }, b);
}
add(ruler, 'path', { d: 'M531 2h10l-5 6z', fill: '#b7e03c' });

const mini = document.getElementById('mini');
box(mini, 0, 2, 703, 1, '#4b434f');
box(mini, 708, 2, 76, 1, '#4b434f');
box(mini, 40, 7, 610, 1, '#41484c');
box(mini, 0, 12, 780, 1, '#3d5a57');
box(mini, 119, 1, 90, 12, '#69647c');
box(mini, 125, 8, 70, 1, '#80858c');
box(mini, 119, 12, 90, 1, '#7ea08e');
box(mini, 169, 1, 1, 12, '#c5e04a');

/* Piano roll: one semitone is 12 px, bar 5 starts at x 293. */
const RB = 111.700, RL = 208;
const rollGrid = (svg, h, rows) => {
  box(svg, 0, 0, 85, h, '#323449');
  box(svg, 85, 0, 500, h, '#2d2f45');
  for (let i = -12; i < 52; i++) {
    const x = Math.round(85 + i * RB / 16);
    box(svg, x, 0, 1, h, i % 16 === 0 ? '#1b1d33' : i % 4 === 0 ? '#25273d' : '#2a2c42');
  }
  if (rows) for (let y = 1; y < h; y += 12) box(svg, 0, y, 500, 1, (y - 133) % 144 === 0 ? '#1e2038' : '#292b41');
};
const roll = document.getElementById('notes');
glow(roll, 'g2');
rollGrid(roll, 340, true);
const notes = [['C6', 208, 250], ['A5', 251, 292], ['A5', 293, 362], ['A5', 376, 431], ['A5', 432, 473], ['A5', 474, 515], ['C6', 515, 585], ['A5', 599, 640]];
box(roll, 212, 0, 8, 340, 'url(#g2)');
for (const [n, a, b] of notes) {
  const y = n === 'C6' ? 122 : 158;
  box(roll, a - RL, y, b - a, 11, '#aee0b4', { stroke: '#7fb88a', 'stroke-width': 1 });
  add(roll, 'text', { x: a - RL + 2, y: y + 8, class: 'notename' }, n);
}
box(roll, 219, 0, 1, 340, '#9fd66a');

const ctl = document.getElementById('ctl');
glow(ctl, 'g3');
rollGrid(ctl, 94, false);
box(ctl, 212, 0, 8, 94, 'url(#g3)');
box(ctl, 219, 0, 1, 94, '#9fd66a');
for (const [, a, b] of notes) {
  box(ctl, a - RL, 1, b - a + 1, 1, '#c4c8d2');
  box(ctl, a - RL, 1, 2, 93, '#eceef6');
}

const rr = document.getElementById('rruler');
for (let b = 5; b < 9; b++) add(rr, 'text', { x: 86 + (b - 5) * RB, y: 9, class: 'num', 'text-anchor': 'middle' }, b);
add(rr, 'path', { d: 'M215 1h9l-4 7z', fill: '#b7e03c' });

const rm = document.getElementById('rmini');
const mx = x => x - 221;
box(rm, mx(331), 0, 129, 12, '#474a50', { stroke: '#c3cc5a' });
for (const [a, b, y] of [[221, 288, 9], [288, 309, 1], [314, 331, 1], [460, 490, 8]]) box(rm, mx(a), y, b - a, 2, '#86c594');
for (const [a, b, y] of [[331, 343, 1], [343, 376, 8], [381, 422, 8], [422, 443, 1], [448, 460, 8]]) box(rm, mx(a), y, b - a, 2, '#f0f5f0');
box(rm, mx(396), 0, 1, 12, '#c3cc5a');
```
